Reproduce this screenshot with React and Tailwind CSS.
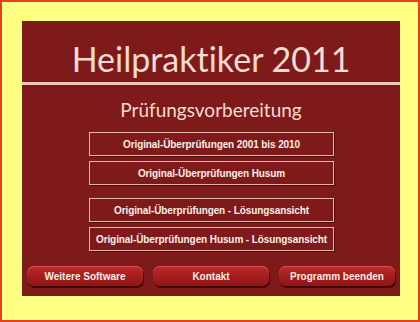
export default function App() {
  const mid = [
    "Original-Überprüfungen 2001 bis 2010",
    "Original-Überprüfungen Husum",
  ];
  const mid2 = [
    "Original-Überprüfungen - Lösungsansicht",
    "Original-Überprüfungen Husum - Lösungsansicht",
  ];
  const Btn = ({ children }) => (
    <div className="w-[245px] h-[24px] flex items-center justify-center whitespace-nowrap border border-[#e2b4ac] shadow-[1px_1px_0_#4e0c0c] text-[10px] tracking-[-0.1px] font-bold text-[#fbeee8] font-['Liberation_Sans',Arial,sans-serif]">
      {children}
    </div>
  );
  const Round = ({ children }) => (
    <div className="w-[116px] h-[20px] rounded-[7px] flex items-center justify-center whitespace-nowrap bg-gradient-to-b from-[#c02a2a] via-[#a51e1f] to-[#8e1618] shadow-[1px_2px_1px_#3f0606,inset_0_1px_0_#d85050] text-[10px] font-bold text-[#fbeee8] font-['Liberation_Sans',Arial,sans-serif]">
      {children}
    </div>
  );
  return (
    <div className="w-[420px] h-[322px] bg-[#ffff84] border-2 border-[#e8401c] pl-[20px] pt-[19px]">
      <div className="w-[378px] h-[275px] bg-[#7f1a1b] flex flex-col">
        <div className="h-[61px] flex items-end justify-center pb-[6px] text-[34px] leading-none text-[#f6dcd2] font-['Lato',sans-serif] [font-variant-ligatures:none]">
          Heilpraktiker 2011
        </div>
        <div className="h-[3px] bg-[#efc6bc]" />
        <div className="mt-[15px] text-center text-[19px] leading-none text-[#f6dcd2] font-['Lato',sans-serif]">
          Prüfungsvorbereitung
        </div>
        <div className="mt-[13px] ml-[67px] flex flex-col gap-[5px]">
          {mid.map((t) => (
            <Btn key={t}>{t}</Btn>
          ))}
        </div>
        <div className="mt-[13px] ml-[67px] flex flex-col gap-[5px]">
          {mid2.map((t) => (
            <Btn key={t}>{t}</Btn>
          ))}
        </div>
        <div className="mt-[15px] ml-[5px] flex gap-[10px]">
          <Round>Weitere Software</Round>
          <Round>Kontakt</Round>
          <Round>Programm beenden</Round>
        </div>
      </div>
    </div>
  );
}
